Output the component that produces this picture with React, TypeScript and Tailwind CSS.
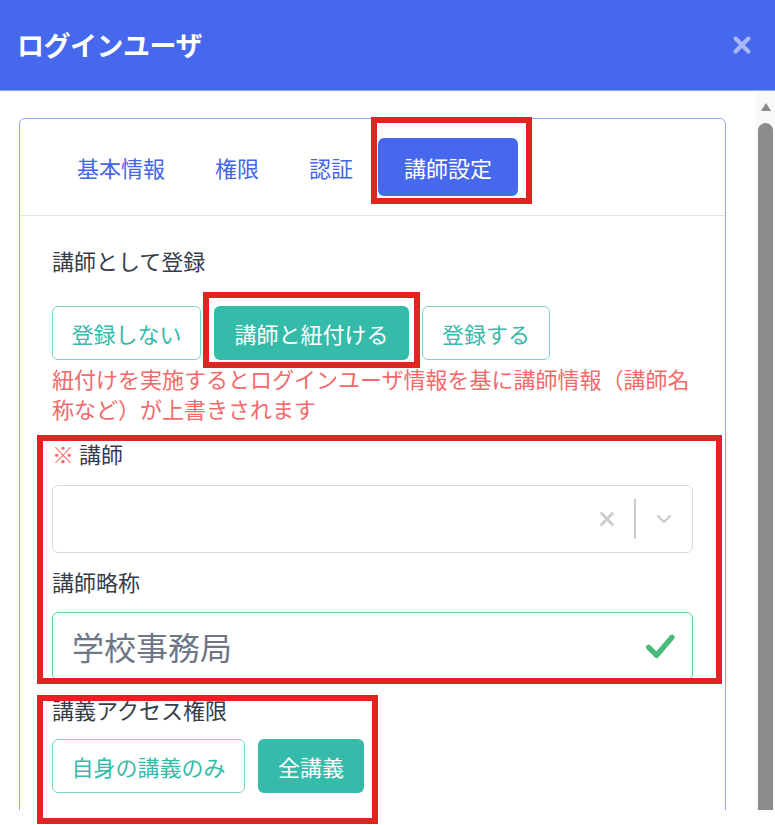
import React from 'react';

const font = { fontFamily: '"Noto Sans CJK JP", "Noto Sans", sans-serif' };

const CloseIcon: React.FC<{ className?: string }> = ({ className }) => (
    <svg viewBox="0 0 24 24" className={className} fill="none" stroke="currentColor" strokeWidth={4.5} strokeLinecap="round">
        <path d="M5 5 L19 19 M19 5 L5 19" />
    </svg>
);

const App: React.FC = () => {
    const tabs = ['基本情報', '権限', '認証'];

    return (
        <div className="relative w-[775px] h-[825px] bg-white overflow-hidden" style={font}>
            {/* header */}
            <div className="h-[91px] bg-[#4568ec] border-b border-[#8ea2f3] flex items-center justify-between pl-[17px] pr-[22px]">
                <h1 className="text-[27px] font-bold text-white tracking-[-0.5px]">ログインユーザ</h1>
                <CloseIcon className="w-[22px] h-[22px] text-[#a9b8f6]" />
            </div>

            {/* body */}
            <div className="flex h-[719px] overflow-hidden">
                <div className="flex-1 pl-[19px] pr-[30px] pt-[27px]">
                    <div className="border border-[#94a8f5] rounded-md h-[760px]">
                        <div className="flex items-center h-[97px] border-b border-[#e2e2e2] pl-[57px]">
                            {tabs.map(t => (
                                <span key={t} className="text-[22px] text-[#4466e8] mr-[50px]">{t}</span>
                            ))}
                            <button className="-ml-[25px] w-[140px] h-[58px] rounded-md bg-[#4568ec] text-white text-[22px]">講師設定</button>
                        </div>

                        <div className="px-[32px] pt-[29px]">
                            <div className="text-[22px] leading-[30px] text-[#373d48]">講師として登録</div>
                            <div className="flex gap-[13px] mt-[31px]">
                                <button className="w-[149px] h-[54px] rounded-md border border-[#7dd4c8] text-[#35bba9] text-[22px]">登録しない</button>
                                <button className="w-[195px] h-[54px] rounded-md bg-[#35bba9] text-white text-[22px]">講師と紐付ける</button>
                                <button className="w-[128px] h-[54px] rounded-md border border-[#7dd4c8] text-[#35bba9] text-[22px]">登録する</button>
                            </div>
                            <p className="text-[22px] leading-[30px] text-[#f26a6a] mt-[3px]">
                                紐付けを実施するとログインユーザ情報を基に講師情報（講師名称など）が上書きされます
                            </p>

                            <div className="mt-[15px] text-[22px] leading-[30px] text-[#373d48]">
                                <span className="text-[#f26a6a]">※</span> 講師
                            </div>
                            <div className="mt-[17px] h-[68px] rounded-md border border-[#dadada] flex items-center justify-end pr-[18px]">
                                <svg viewBox="0 0 20 20" className="w-[18px] h-[18px] text-[#cccccc]" fill="none" stroke="currentColor" strokeWidth={3.2} strokeLinecap="round">
                                    <path d="M4 4 L16 16 M16 4 L4 16" />
                                </svg>
                                <div className="w-[2px] h-[40px] bg-[#cccccc] mx-[18px]" />
                                <svg viewBox="0 0 20 20" className="w-[20px] h-[20px] text-[#cccccc]" fill="none" stroke="currentColor" strokeWidth={2.4} strokeLinecap="round" strokeLinejoin="round">
                                    <path d="M4 7 L10 13 L16 7" />
                                </svg>
                            </div>

                            <div className="mt-[13px] text-[22px] leading-[30px] text-[#373d48]">講師略称</div>
                            <div className="mt-[16px] h-[68px] rounded-md border border-[#68cf8c] flex items-center justify-between pl-[19px] pr-[16px]">
                                <span className="text-[32px] text-[#6f7787]">学校事務局</span>
                                <svg viewBox="0 0 24 24" className="w-[32px] h-[32px] text-[#48bb78]" fill="none" stroke="currentColor" strokeWidth={4} strokeLinecap="round" strokeLinejoin="round">
                                    <path d="M3.5 13 L9.5 19 L21 5.5" />
                                </svg>
                            </div>

                            <div className="mt-[14px] text-[22px] leading-[30px] text-[#373d48]">講義アクセス権限</div>
                            <div className="flex gap-[13px] mt-[15px]">
                                <button className="w-[193px] h-[54px] rounded-md border border-[#7dd4c8] text-[#35bba9] text-[22px]">自身の講義のみ</button>
                                <button className="w-[106px] h-[54px] rounded-md bg-[#35bba9] text-white text-[22px]">全講義</button>
                            </div>
                        </div>
                    </div>
                </div>

                {/* scrollbar */}
                <div className="w-[19px] bg-[#f8f8f8] flex flex-col items-center pt-[12px]">
                    <svg viewBox="0 0 10 8" className="w-[12px] h-[8px] text-[#8a8a8a]" fill="currentColor">
                        <path d="M5 0 L10 8 L0 8 Z" />
                    </svg>
                    <div className="mt-[12px] w-[15px] flex-1 bg-[#8c8c8c] rounded-t-full" />
                </div>
            </div>

            {/* annotation boxes */}
            <div className="absolute left-[371px] top-[117px] w-[161px] h-[87px] border-[6px] border-[#e52222]" />
            <div className="absolute left-[203px] top-[292px] w-[217px] h-[76px] border-[6px] border-[#e52222]" />
            <div className="absolute left-[37px] top-[435px] w-[685px] h-[249px] border-[6px] border-[#e52222]" />
            <div className="absolute left-[37px] top-[695px] w-[341px] h-[129px] border-[6px] border-[#e52222]" />
        </div>
    );
};

export default App;
